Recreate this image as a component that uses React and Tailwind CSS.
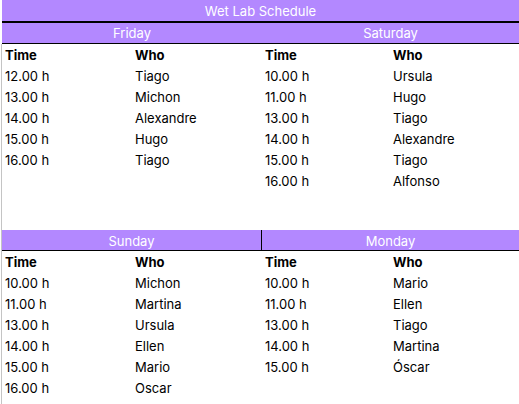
import React from "react";

const P = "bg-[#b388ff]";

const friday = [["12.00 h","Tiago"],["13.00 h","Michon"],["14.00 h","Alexandre"],["15.00 h","Hugo"],["16.00 h","Tiago"]];
const saturday = [["10.00 h","Ursula"],["11.00 h","Hugo"],["13.00 h","Tiago"],["14.00 h","Alexandre"],["15.00 h","Tiago"],["16.00 h","Alfonso"]];
const sunday = [["10.00 h","Michon"],["11.00 h","Martina"],["13.00 h","Ursula"],["14.00 h","Ellen"],["15.00 h","Mario"],["16.00 h","Oscar"]];
const monday = [["10.00 h","Mario"],["11.00 h","Ellen"],["13.00 h","Tiago"],["14.00 h","Martina"],["15.00 h","Óscar"]];

function Rows({ left, right, n }) {
  const rows = [];
  rows.push(
    <div key="h" className="grid grid-cols-[130px_130px_128px_1fr] h-[21px] pt-[1px] items-center font-bold">
      <div className="pl-[3px]">Time</div>
      <div className="pl-[3px]">Who</div>
      <div className="pl-[3px]">Time</div>
      <div className="pl-[3px]">Who</div>
    </div>
  );
  for (let i = 0; i < n; i++) {
    const l = left[i] || ["", ""];
    const r = right[i] || ["", ""];
    rows.push(
      <div key={i} className="grid grid-cols-[130px_130px_128px_1fr] h-[21px] pt-[1px] items-center">
        <div className="pl-[3px]">{l[0]}</div>
        <div className="pl-[3px]">{l[1]}</div>
        <div className="pl-[3px]">{r[0]}</div>
        <div className="pl-[3px]">{r[1]}</div>
      </div>
    );
  }
  return <>{rows}</>;
}

export default function App() {
  return (
    <div className="w-[519px] h-[404px] bg-white overflow-hidden font-['Inter',sans-serif] text-[13px] text-black leading-none">
      <div className={`ml-[2px] h-[21px] pt-[1px] ${P} text-white flex items-center justify-center`}>Wet Lab Schedule</div>
      <div className="ml-[2px] h-[2px] bg-black" />
      <div className={`ml-[2px] h-[20px] pt-[1px] ${P} text-white grid grid-cols-[260px_1fr] items-center`}>
        <div className="text-center">Friday</div>
        <div className="text-center">Saturday</div>
      </div>
      <div className="ml-[2px] h-px bg-black" />
      <div className="ml-px border-l border-[#c4c4c4] h-full">
        <Rows left={friday} right={saturday} n={6} />
        <div className="h-[39px]" />
        <div className={`h-[20px] ${P} text-white grid grid-cols-[260px_1fr] items-center`}>
          <div className="border-r border-black h-full pt-[2px] flex items-center justify-center">Sunday</div>
          <div className="text-center pt-[2px]">Monday</div>
        </div>
        <div className="h-px bg-black" />
        <Rows left={sunday} right={monday} n={6} />
      </div>
    </div>
  );
}
